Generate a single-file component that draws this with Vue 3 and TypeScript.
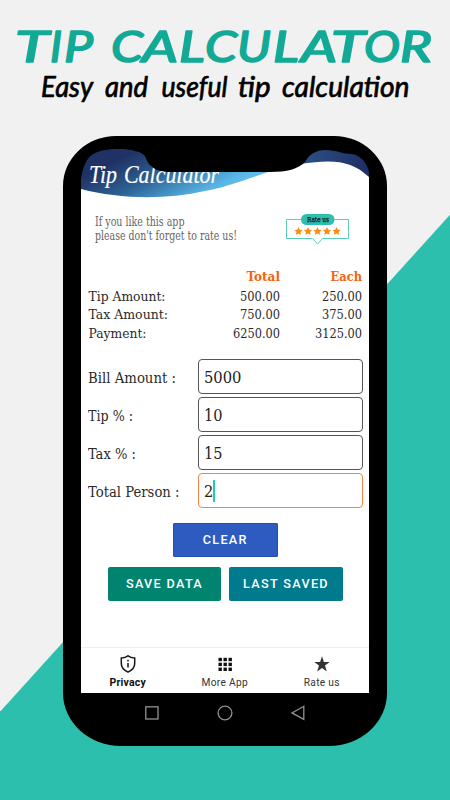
<script setup lang="ts">
interface Row { label: string; total: string; each: string; w: number }
interface Field { label: string; value: string; w: number; vw: number; active?: boolean }
interface Letter { c: string; x: number; w: number }

const title: Letter[] = [
  { c: 'T', x: 15, w: 34 }, { c: 'I', x: 50, w: 12 }, { c: 'P', x: 64, w: 29 },
  { c: 'C', x: 111, w: 32 }, { c: 'A', x: 142, w: 36 }, { c: 'L', x: 179, w: 26 },
  { c: 'C', x: 205, w: 32 }, { c: 'U', x: 237, w: 34 }, { c: 'L', x: 273, w: 26 },
  { c: 'A', x: 301, w: 36 }, { c: 'T', x: 331, w: 34 }, { c: 'O', x: 364, w: 36 },
  { c: 'R', x: 400, w: 32 },
]
const rows: Row[] = [
  { label: 'Tip Amount:', total: '500.00', each: '250.00', w: 77 },
  { label: 'Tax Amount:', total: '750.00', each: '375.00', w: 79.5 },
  { label: 'Payment:', total: '6250.00', each: '3125.00', w: 58 },
]
const fields: Field[] = [
  { label: 'Bill Amount :', value: '5000', w: 88, vw: 37.5 },
  { label: 'Tip % :', value: '10', w: 45, vw: 18.5 },
  { label: 'Tax % :', value: '15', w: 48, vw: 18.5 },
  { label: 'Total Person :', value: '2', w: 91.5, vw: 9.3, active: true },
]
const stars: number[] = [12.5, 22, 31.5, 41, 50.5]
const dots: number[] = [0, 5, 10]
</script>

<template>
  <main class="poster">
    <svg class="headline" width="450" height="136" viewBox="0 0 450 136">
      <g class="title">
        <text v-for="l in title" :key="l.x" :x="l.x" y="61.5" :textLength="l.w" lengthAdjust="spacingAndGlyphs">{{ l.c }}</text>
      </g>
      <g class="subtitle">
        <text x="41" y="96.5" textLength="52" lengthAdjust="spacingAndGlyphs">Easy</text>
        <text x="105" y="96.5" textLength="43" lengthAdjust="spacingAndGlyphs">and</text>
        <text x="161.500" y="96.5" textLength="66" lengthAdjust="spacingAndGlyphs">useful</text>
        <text x="238" y="96.5" textLength="32.500" lengthAdjust="spacingAndGlyphs">tip</text>
        <text x="282" y="96.5" textLength="127.500" lengthAdjust="spacingAndGlyphs">calculation</text>
      </g>
    </svg>

    <section class="phone">
      <div class="screen">
        <svg class="banner" width="289" height="51" viewBox="81 149 289 51">
          <defs>
            <linearGradient id="sky" gradientUnits="userSpaceOnUse" x1="120" y1="158" x2="160" y2="238">
              <stop offset="0" stop-color="#203164" />
              <stop offset=".35" stop-color="#2c6093" />
              <stop offset=".75" stop-color="#57b4e5" />
              <stop offset="1" stop-color="#6cc8f2" />
            </linearGradient>
            <linearGradient id="edge" x1="0" x2="1">
              <stop offset="0" stop-color="#2c5389" />
              <stop offset="1" stop-color="#1f2d62" />
            </linearGradient>
          </defs>
          <path fill="url(#sky)" d="M81 149H280V168C258 175 231 186 205 191C165 200 119 199 81 189Z" />
          <path fill="url(#edge)" d="M300 149H370V178C352 160 333 159 300 164Z" />
          <text class="brand" x="89" y="183" textLength="28" lengthAdjust="spacingAndGlyphs">Tip</text>
          <text class="brand" x="124" y="183" textLength="95" lengthAdjust="spacingAndGlyphs">Calculator</text>
          <path d="M80 148V188C81 174 84 160 93 154C103 148 124 147 139 152C147 155 145 159 149 164C154 170 161 172 171 172H270C287 172 298 169 305 162C310 153 317 150 326 150C336 150 343 154 351 154C362 155 369 165 370 178V148Z" />
        </svg>

        <div class="promo">
          <svg width="146" height="34" viewBox="0 0 146 34" class="promo-copy">
            <text x="0" y="13" textLength="89.500" lengthAdjust="spacingAndGlyphs">If you like this app</text>
            <text x="0" y="27" textLength="142" lengthAdjust="spacingAndGlyphs">please don't forget to rate us!</text>
          </svg>
          <svg width="63" height="33" viewBox="0 0 63 33">
            <path d="M.5 6.500H62.500V25.500H36.500L31.500 31L26.500 25.500H.5Z" fill="none" stroke="#5ccdbd" />
            <rect x="15" y="1" width="33.500" height="11" rx="5.500" fill="#2dbfae" />
            <text class="pill" x="21" y="9.400" textLength="22" lengthAdjust="spacingAndGlyphs">Rate us</text>
            <path v-for="x in stars" :key="x" :transform="`translate(${x} 18.2)`" fill="#fb8c14" d="M0-4.300L1.300-1.500L4.100-1.200L2.100.7L2.600 3.500L0 2.200L-2.600 3.500L-2.100.7L-4.100-1.200L-1.300-1.500Z" />
          </svg>
        </div>

        <div class="summary">
          <div class="line head">
            <span></span>
            <svg width="60" height="18"><text x="26.500" y="13" textLength="33.500" lengthAdjust="spacingAndGlyphs">Total</text></svg>
            <svg width="60" height="18"><text x="28.500" y="13" textLength="31.500" lengthAdjust="spacingAndGlyphs">Each</text></svg>
          </div>
          <div v-for="r in rows" :key="r.label" class="line">
            <svg width="100" height="18"><text x="0.500" y="13.500" :textLength="r.w" lengthAdjust="spacingAndGlyphs">{{ r.label }}</text></svg>
            <svg width="60" height="18"><text :x="60 - (r.total.length === 7 ? 47 : 40)" y="13.500" :textLength="r.total.length === 7 ? 47 : 40" lengthAdjust="spacingAndGlyphs">{{ r.total }}</text></svg>
            <svg width="60" height="18"><text :x="60 - (r.each.length === 7 ? 47 : 40)" y="13.500" :textLength="r.each.length === 7 ? 47 : 40" lengthAdjust="spacingAndGlyphs">{{ r.each }}</text></svg>
          </div>
        </div>

        <div class="form">
          <div v-for="f in fields" :key="f.label" class="field">
            <svg width="110" height="34" class="label"><text x="0" y="24" :textLength="f.w" lengthAdjust="spacingAndGlyphs">{{ f.label }}</text></svg>
            <div class="input" :class="{ active: f.active }">
              <svg :width="f.vw + 1" height="32"><text x="0" y="23" :textLength="f.vw" lengthAdjust="spacingAndGlyphs">{{ f.value }}</text></svg>
              <i v-if="f.active" class="caret"></i>
            </div>
          </div>
        </div>

        <div class="actions">
          <button class="clear">CLEAR</button>
          <div class="pair">
            <button class="save">SAVE DATA</button>
            <button class="last">LAST SAVED</button>
          </div>
        </div>

        <nav class="tabs">
          <div class="tab on">
            <svg width="20" height="20" viewBox="0 0 20 20" fill="none" stroke="#151515" stroke-width="1.500">
              <path d="M10 1.800C8 3.300 6 3.800 3.300 4.100V9.500C3.300 13.500 6 16.300 10 18.100C14 16.300 16.700 13.500 16.700 9.500V4.100C14 3.800 12 3.300 10 1.800Z" />
              <path d="M10 9V13.500M10 5.800V7.500" />
            </svg>
            <span>Privacy</span>
          </div>
          <div class="tab">
            <svg width="20" height="20" viewBox="0 0 20 20" fill="#111">
              <template v-for="y in dots" :key="y">
                <rect v-for="x in dots" :key="x" :x="3.500 + x" :y="3.800 + y * .98" width="3.400" height="3.400" />
              </template>
            </svg>
            <span>More App</span>
          </div>
          <div class="tab">
            <svg width="20" height="20" viewBox="0 0 20 20" fill="#333">
              <path d="M10 2.200L11.900 8H17.700L13 11.600L14.800 17.600L10 14L5.200 17.600L7 11.600L2.300 8H8.100Z" />
            </svg>
            <span>Rate us</span>
          </div>
        </nav>
      </div>

      <div class="system">
        <svg width="16" height="16" viewBox="0 0 16 16"><rect x="1.800" y="1.800" width="12.200" height="12.200" /></svg>
        <svg width="16" height="16" viewBox="0 0 16 16"><circle cx="8" cy="8" r="6.900" /></svg>
        <svg width="16" height="16" viewBox="0 0 16 16"><path d="M13.800 1.300V14.400L2 7.900Z" /></svg>
      </div>
    </section>
  </main>
</template>

<style>
body { margin: 0; }
</style>

<style scoped>
.poster {
  width: 450px;
  height: 800px;
  overflow: hidden;
  background: #f1f1f1;
  background-image: linear-gradient(to bottom right, #f1f1f1 50%, #2dbfae 50.150%);
  background-size: 450px 497px;
  background-position: 0 214px;
  background-repeat: no-repeat;
  box-shadow: inset 0 -89px #2dbfae;
  font-family: Roboto, sans-serif;
}
svg { display: block; flex: none; }
.headline { font-family: Lato, sans-serif; font-style: italic; }
.title { font-size: 43.500px; font-weight: 400; fill: #12aa97; stroke: #12aa97; stroke-width: 1.700; stroke-linejoin: round; }
.subtitle { font-size: 28px; font-weight: 400; fill: #000; stroke: #000; stroke-width: .7; stroke-linejoin: round; }
.phone {
  box-sizing: border-box;
  width: 324px;
  height: 610px;
  margin-left: 62.500px;
  padding: 13px 17.500px 0 18px;
  border-radius: 53px 53px 58px 58px / 50px 50px 53px 53px;
  background: #000;
}
.screen {
  display: flex;
  flex-direction: column;
  width: 288.500px;
  height: 544px;
  background: #fff;
  overflow: hidden;
  color: #222;
  font-family: "DejaVu Serif Condensed", "DejaVu Serif", serif;
  font-stretch: condensed;
}
.brand { font: italic 400 25px "Liberation Serif", serif; fill: #fff; stroke: #fff; stroke-width: .2; }
.promo {
  display: flex;
  justify-content: space-between;
  height: 55px;
  padding: 13px 20px 0 14px;
  box-sizing: border-box;
}
.promo-copy { font-size: 12.500px; fill: #666; overflow: visible; }
.pill { font-size: 8px; fill: #111; stroke: #111; stroke-width: .25; }
.summary { padding: 13px 7px 0 7.500px; font-size: 13.500px; }
.line { display: grid; grid-template-columns: 132px 60px 82px; height: 18.700px; }
.line > :last-child { justify-self: end; }
.line svg { overflow: visible; }
.line text { fill: #2a2a2a; }
.line.head text { fill: #f4630f; font-weight: 700; font-size: 13px; }
.form { display: flex; flex-direction: column; gap: 3px; margin-top: 16.500px; padding: 0 6.500px 0 7px; }
.field { display: flex; justify-content: space-between; height: 35px; }
.label { font-size: 14.300px; fill: #2a2a2a; }
.input {
  display: flex;
  box-sizing: border-box;
  width: 165px;
  height: 35px;
  padding-left: 5.500px;
  border: 1px solid #555;
  border-radius: 4px;
  font-size: 16.800px;
}
.input text { fill: #222; }
.input.active { border-color: #f58345; }
.caret { width: 2px; height: 22px; margin-top: 5.500px; margin-left: -1px; background: #1bcdb9; }
.actions { display: flex; flex-direction: column; align-items: center; gap: 10px; margin-top: 14.500px; padding-left: 1px; }
.pair { display: flex; gap: 8px; }
button {
  width: 113.500px;
  height: 34px;
  padding: 0;
  border: 0;
  border-radius: 2px;
  color: #fff;
  font: 500 12.700px Roboto, sans-serif;
  font-stretch: normal;
  letter-spacing: 1.300px;
}
.clear { width: 105.500px; background: #2e5bbf; box-shadow: inset 0 0 0 1px #1f4db9; }
.save { background: #00836f; }
.last { background: #007b8e; }
.tabs {
  display: grid;
  grid-template-columns: repeat(3, 97px);
  justify-content: center;
  box-sizing: border-box;
  height: 46.500px;
  margin-top: auto;
  padding-top: 6px;
  border-top: 1px solid #eee;
  font: 400 10.500px/13px Roboto, sans-serif;
  font-stretch: normal;
  letter-spacing: .3px;
}
.tab { display: flex; flex-direction: column; align-items: center; gap: 2px; color: #333; }
.tab:not(.on) { font-size: 10.200px; }
.on { color: #111; font-weight: 700; letter-spacing: .2px; }
.system { display: flex; justify-content: center; gap: 57px; padding-top: 12px; }
.system svg { fill: none; stroke: #929292; stroke-width: 1.300; }
</style>
